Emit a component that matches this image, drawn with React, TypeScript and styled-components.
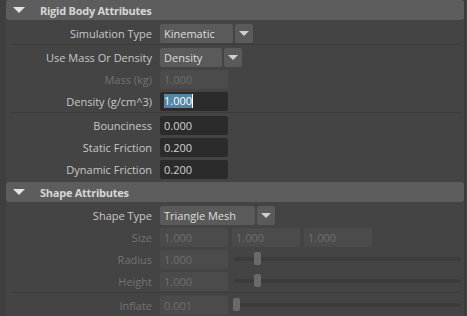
import React from "react";
import styled, { createGlobalStyle } from "styled-components";

const Global = createGlobalStyle`
  html, body { margin: 0; padding: 0; background: #444444; overflow: hidden; }
  body { font-family: "Open Sans", "Noto Sans", sans-serif; font-size: 11px; }
`;

const Page = styled.div`
  display: flex;
  width: 467px;
  height: 316px;
  background: #444444;
  overflow: hidden;
`;

const LeftGutter = styled.div`
  width: 6px;
  background: #3f3f3f;
  flex: none;
`;

const RightGutter = styled.div`
  width: 3px;
  flex: none;
  border-left: 2px solid #3b3b3b;
  box-sizing: border-box;
  background: #454545;
`;

const Content = styled.div`
  flex: 1;
  display: flex;
  flex-direction: column;
`;

const Header = styled.div`
  height: 20px;
  flex: none;
  background: #5d5d5d;
  border-radius: 3px;
  display: flex;
  align-items: center;
  padding-left: 7px;
  color: #d6d6d6;
  font-weight: 700;
  font-size: 11px;
  letter-spacing: -0.25px;
`;

const Tri = styled.span`
  width: 0;
  height: 0;
  border-left: 6px solid transparent;
  border-right: 6px solid transparent;
  border-top: 6px solid #e4e4e4;
  margin-right: 15px;
`;

const Body = styled.div`
  display: flex;
  flex-direction: column;
  padding: 2px 0 2px;
`;

const Row = styled.div`
  display: grid;
  grid-template-columns: 146px 1fr;
  column-gap: 8px;
  align-items: center;
  height: 22px;
`;

const Label = styled.div<{ $disabled?: boolean }>`
  text-align: right;
  color: ${(p) => (p.$disabled ? "#737373" : "#c8c8c8")};
  white-space: nowrap;
`;

const Controls = styled.div`
  display: flex;
  align-items: center;
  gap: 4px;
`;

const Separator = styled.div`
  height: 1px;
  background: #3b3b3b;
  margin: 0 3px 1px 4px;
`;

const Drop = styled.div`
  display: flex;
  gap: 2px;
  height: 19px;
`;

const DropMain = styled.div<{ $w: number }>`
  width: ${(p) => p.$w}px;
  background: #5a5a5a;
  border-radius: 2px;
  color: #dedede;
  display: flex;
  align-items: center;
  padding-left: 4px;
  box-sizing: border-box;
`;

const DropArrow = styled.div`
  width: 18px;
  background: #5a5a5a;
  border-radius: 2px;
  display: flex;
  align-items: center;
  justify-content: center;
  &::after {
    content: "";
    border-left: 5px solid transparent;
    border-right: 5px solid transparent;
    border-top: 5px solid #cfcfcf;
  }
`;

const Field = styled.div<{ $disabled?: boolean }>`
  width: 68px;
  height: 19px;
  box-sizing: border-box;
  border-radius: 2px;
  background: ${(p) => (p.$disabled ? "#4b4b4b" : "#2b2b2b")};
  color: ${(p) => (p.$disabled ? "#6e6e6e" : "#d2d2d2")};
  display: flex;
  align-items: center;
  padding-left: 4px;
  flex: none;
`;

const Selected = styled.span`
  background: #5285a6;
  color: #ffffff;
  border-right: 1px solid #ffffff;
  line-height: 14px;
`;

const Slider = styled.div`
  position: relative;
  flex: 1;
  height: 19px;
  margin-left: -1px;
  margin-right: 3px;
  &::before {
    content: "";
    position: absolute;
    left: 3px;
    right: 0;
    top: 7px;
    height: 4px;
    border-radius: 2px;
    background: #3c3c3c;
  }
`;

const Thumb = styled.div`
  position: absolute;
  top: 2px;
  width: 7px;
  height: 13px;
  border-radius: 2px;
  background: #6a6a6a;
`;

type SliderProps = { pos: number };
const SliderBar = ({ pos }: SliderProps) => (
  <Slider>
    <Thumb style={{ left: pos }} />
  </Slider>
);

export default function App() {
  return (
    <Page>
      <Global />
      <LeftGutter />
      <Content>
        <Header>
          <Tri />
          Rigid Body Attributes
        </Header>
        <Body>
          <Row>
            <Label>Simulation Type</Label>
            <Controls>
              <Drop>
                <DropMain $w={73}>Kinematic</DropMain>
                <DropArrow />
              </Drop>
            </Controls>
          </Row>
          <Separator />
          <Row>
            <Label>Use Mass Or Density</Label>
            <Controls>
              <Drop>
                <DropMain $w={62}>Density</DropMain>
                <DropArrow />
              </Drop>
            </Controls>
          </Row>
          <Row>
            <Label $disabled>Mass (kg)</Label>
            <Controls>
              <Field $disabled>1.000</Field>
            </Controls>
          </Row>
          <Row>
            <Label>Density (g/cm^3)</Label>
            <Controls>
              <Field>
                <Selected>1.000</Selected>
              </Field>
            </Controls>
          </Row>
          <Separator />
          <Row>
            <Label>Bounciness</Label>
            <Controls>
              <Field>0.000</Field>
            </Controls>
          </Row>
          <Row>
            <Label>Static Friction</Label>
            <Controls>
              <Field>0.200</Field>
            </Controls>
          </Row>
          <Row>
            <Label>Dynamic Friction</Label>
            <Controls>
              <Field>0.200</Field>
            </Controls>
          </Row>
        </Body>
        <Header>
          <Tri />
          Shape Attributes
        </Header>
        <Body>
          <Row>
            <Label>Shape Type</Label>
            <Controls>
              <Drop>
                <DropMain $w={95}>Triangle Mesh</DropMain>
                <DropArrow />
              </Drop>
            </Controls>
          </Row>
          <Row>
            <Label $disabled>Size</Label>
            <Controls>
              <Field $disabled>1.000</Field>
              <Field $disabled>1.000</Field>
              <Field $disabled>1.000</Field>
            </Controls>
          </Row>
          <Row>
            <Label $disabled>Radius</Label>
            <Controls>
              <Field $disabled>1.000</Field>
              <SliderBar pos={23} />
            </Controls>
          </Row>
          <Row>
            <Label $disabled>Height</Label>
            <Controls>
              <Field $disabled>1.000</Field>
              <SliderBar pos={23} />
            </Controls>
          </Row>
          <Separator />
          <Row>
            <Label $disabled>Inflate</Label>
            <Controls>
              <Field $disabled>0.001</Field>
              <SliderBar pos={2} />
            </Controls>
          </Row>
        </Body>
      </Content>
      <RightGutter />
    </Page>
  );
}
